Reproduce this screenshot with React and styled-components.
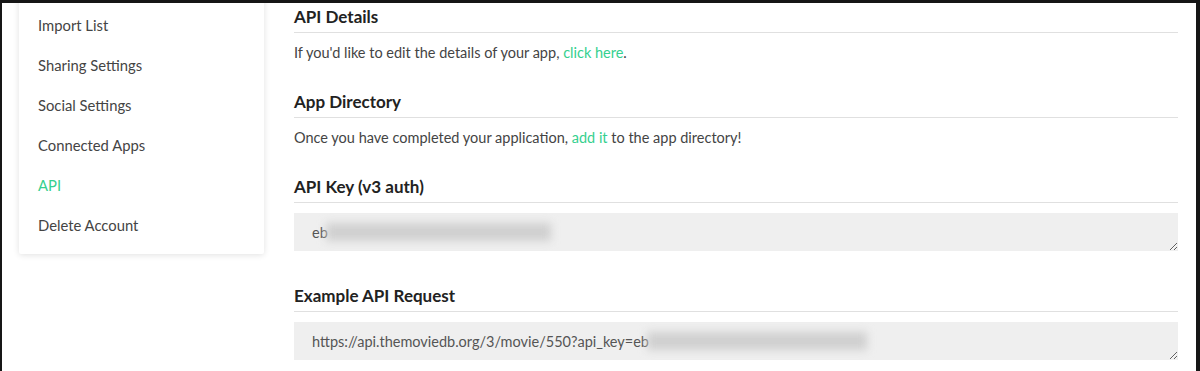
import React from "react";
import styled, { createGlobalStyle } from "styled-components";

const Global = createGlobalStyle`
  html, body { margin: 0; padding: 0; background: #fff; }
  body { font-family: Lato, "Noto Sans", sans-serif; }
  * { box-sizing: border-box; }
`;

const Frame = styled.div`
  width: 1200px;
  height: 371px;
  border-top: 3px solid #161616;
  border-left: 2px solid #161616;
  border-right: 4px solid #161616;
  background: #fff;
`;

const Inner = styled.div`
  height: 100%;
  overflow: hidden;
  display: flex;
  align-items: flex-start;
  padding-left: 17px;
`;

const Sidebar = styled.nav`
  width: 245px;
  flex: none;
  margin-top: -12px;
  padding: 14px 0 9px;
  background: #fff;
  box-shadow: 0 1px 6px rgba(0, 0, 0, 0.12);
  border-radius: 0 0 2px 2px;
`;

const MenuItem = styled.a`
  display: block;
  height: 40px;
  line-height: 40px;
  padding-left: 19px;
  font-size: 14.8px;
  color: ${(p) => (p.$active ? "#35d08f" : "#444")};
  text-decoration: none;
`;

const Main = styled.main`
  flex: none;
  width: 884px;
  margin-left: 30px;
  padding-top: 2px;
`;

const Section = styled.section`
  margin-top: ${(p) => p.$gap || 0}px;
`;

const Heading = styled.h3`
  margin: 0;
  font-size: 17px;
  font-weight: 700;
  line-height: 24px;
  color: #222;
  padding-bottom: 3px;
  border-bottom: 1px solid #e0e0e0;
`;

const Para = styled.p`
  margin: 10px 0 0;
  font-size: 14.5px;
  line-height: 20px;
  color: #444;
`;

const Link = styled.a`
  color: #35d08f;
  text-decoration: none;
`;

const Field = styled.div`
  margin-top: 10px;
  height: 38px;
  background: #efefef;
  padding: 0 18px;
  display: flex;
  align-items: center;
  font-size: 14.5px;
  color: #555;
  resize: vertical;
  overflow: hidden;
  white-space: nowrap;
`;

const Blur = styled.span`
  display: inline-block;
  width: ${(p) => p.$w}px;
  height: 18px;
  background: #d0d0d0;
  filter: blur(4px);
  margin-left: -2px;
`;

const items = [
  "Import List",
  "Sharing Settings",
  "Social Settings",
  "Connected Apps",
  "API",
  "Delete Account",
];

export default function App() {
  return (
    <>
      <Global />
      <Frame>
        <Inner>
          <Sidebar>
            {items.map((t) => (
              <MenuItem key={t} $active={t === "API"}>
                {t}
              </MenuItem>
            ))}
          </Sidebar>
          <Main>
            <Section>
              <Heading>API Details</Heading>
              <Para>
                If you'd like to edit the details of your app, <Link>click here</Link>.
              </Para>
            </Section>
            <Section $gap={27}>
              <Heading>App Directory</Heading>
              <Para>
                Once you have completed your application, <Link>add it</Link> to the app directory!
              </Para>
            </Section>
            <Section $gap={27}>
              <Heading>API Key (v3 auth)</Heading>
              <Field>
                eb
                <Blur $w={225} />
              </Field>
            </Section>
            <Section $gap={33}>
              <Heading>Example API Request</Heading>
              <Field>
                https://api.themoviedb.org/3/movie/550?api_key=eb
                <Blur $w={220} />
              </Field>
            </Section>
          </Main>
        </Inner>
      </Frame>
    </>
  );
}
